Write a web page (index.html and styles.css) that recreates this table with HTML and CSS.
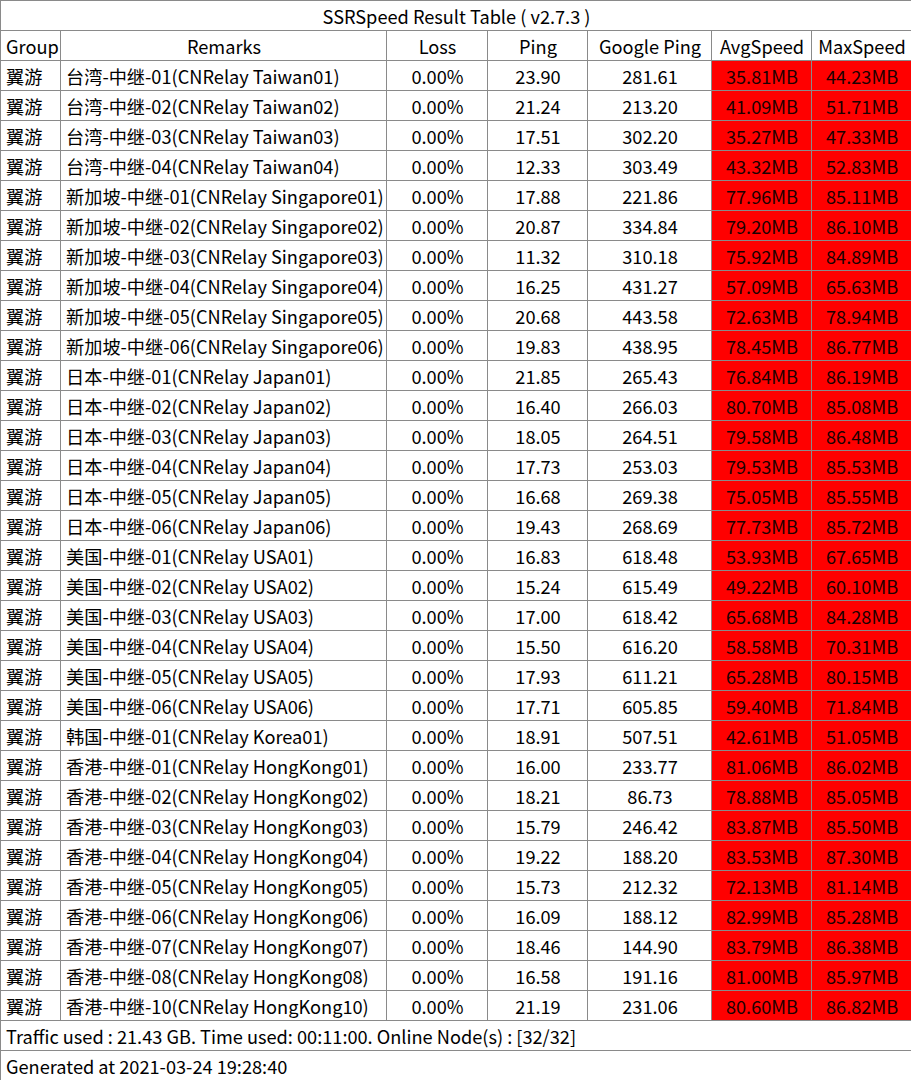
FILE: index.html
```html
<!DOCTYPE html>
<html>
<head>
<meta charset="utf-8">
<link rel="stylesheet" href="styles.css">
</head>
<body>
<table class="result">
<colgroup>
<col class="c-group"><col class="c-remarks"><col class="c-loss"><col class="c-ping"><col class="c-gping"><col class="c-avg"><col class="c-max">
</colgroup>
<thead>
<tr><th colspan="7" class="title">SSRSpeed Result Table ( v2.7.3 )</th></tr>
<tr><th class="left">Group</th><th>Remarks</th><th>Loss</th><th>Ping</th><th>Google Ping</th><th>AvgSpeed</th><th>MaxSpeed</th></tr>
</thead>
<tbody>
<tr><td class="left">翼游</td><td class="left">台湾-中继-01(CNRelay Taiwan01)</td><td>0.00%</td><td>23.90</td><td>281.61</td><td class="red">35.81MB</td><td class="red">44.23MB</td></tr>
<tr><td class="left">翼游</td><td class="left">台湾-中继-02(CNRelay Taiwan02)</td><td>0.00%</td><td>21.24</td><td>213.20</td><td class="red">41.09MB</td><td class="red">51.71MB</td></tr>
<tr><td class="left">翼游</td><td class="left">台湾-中继-03(CNRelay Taiwan03)</td><td>0.00%</td><td>17.51</td><td>302.20</td><td class="red">35.27MB</td><td class="red">47.33MB</td></tr>
<tr><td class="left">翼游</td><td class="left">台湾-中继-04(CNRelay Taiwan04)</td><td>0.00%</td><td>12.33</td><td>303.49</td><td class="red">43.32MB</td><td class="red">52.83MB</td></tr>
<tr><td class="left">翼游</td><td class="left">新加坡-中继-01(CNRelay Singapore01)</td><td>0.00%</td><td>17.88</td><td>221.86</td><td class="red">77.96MB</td><td class="red">85.11MB</td></tr>
<tr><td class="left">翼游</td><td class="left">新加坡-中继-02(CNRelay Singapore02)</td><td>0.00%</td><td>20.87</td><td>334.84</td><td class="red">79.20MB</td><td class="red">86.10MB</td></tr>
<tr><td class="left">翼游</td><td class="left">新加坡-中继-03(CNRelay Singapore03)</td><td>0.00%</td><td>11.32</td><td>310.18</td><td class="red">75.92MB</td><td class="red">84.89MB</td></tr>
<tr><td class="left">翼游</td><td class="left">新加坡-中继-04(CNRelay Singapore04)</td><td>0.00%</td><td>16.25</td><td>431.27</td><td class="red">57.09MB</td><td class="red">65.63MB</td></tr>
<tr><td class="left">翼游</td><td class="left">新加坡-中继-05(CNRelay Singapore05)</td><td>0.00%</td><td>20.68</td><td>443.58</td><td class="red">72.63MB</td><td class="red">78.94MB</td></tr>
<tr><td class="left">翼游</td><td class="left">新加坡-中继-06(CNRelay Singapore06)</td><td>0.00%</td><td>19.83</td><td>438.95</td><td class="red">78.45MB</td><td class="red">86.77MB</td></tr>
<tr><td class="left">翼游</td><td class="left">日本-中继-01(CNRelay Japan01)</td><td>0.00%</td><td>21.85</td><td>265.43</td><td class="red">76.84MB</td><td class="red">86.19MB</td></tr>
<tr><td class="left">翼游</td><td class="left">日本-中继-02(CNRelay Japan02)</td><td>0.00%</td><td>16.40</td><td>266.03</td><td class="red">80.70MB</td><td class="red">85.08MB</td></tr>
<tr><td class="left">翼游</td><td class="left">日本-中继-03(CNRelay Japan03)</td><td>0.00%</td><td>18.05</td><td>264.51</td><td class="red">79.58MB</td><td class="red">86.48MB</td></tr>
<tr><td class="left">翼游</td><td class="left">日本-中继-04(CNRelay Japan04)</td><td>0.00%</td><td>17.73</td><td>253.03</td><td class="red">79.53MB</td><td class="red">85.53MB</td></tr>
<tr><td class="left">翼游</td><td class="left">日本-中继-05(CNRelay Japan05)</td><td>0.00%</td><td>16.68</td><td>269.38</td><td class="red">75.05MB</td><td class="red">85.55MB</td></tr>
<tr><td class="left">翼游</td><td class="left">日本-中继-06(CNRelay Japan06)</td><td>0.00%</td><td>19.43</td><td>268.69</td><td class="red">77.73MB</td><td class="red">85.72MB</td></tr>
<tr><td class="left">翼游</td><td class="left">美国-中继-01(CNRelay USA01)</td><td>0.00%</td><td>16.83</td><td>618.48</td><td class="red">53.93MB</td><td class="red">67.65MB</td></tr>
<tr><td class="left">翼游</td><td class="left">美国-中继-02(CNRelay USA02)</td><td>0.00%</td><td>15.24</td><td>615.49</td><td class="red">49.22MB</td><td class="red">60.10MB</td></tr>
<tr><td class="left">翼游</td><td class="left">美国-中继-03(CNRelay USA03)</td><td>0.00%</td><td>17.00</td><td>618.42</td><td class="red">65.68MB</td><td class="red">84.28MB</td></tr>
<tr><td class="left">翼游</td><td class="left">美国-中继-04(CNRelay USA04)</td><td>0.00%</td><td>15.50</td><td>616.20</td><td class="red">58.58MB</td><td class="red">70.31MB</td></tr>
<tr><td class="left">翼游</td><td class="left">美国-中继-05(CNRelay USA05)</td><td>0.00%</td><td>17.93</td><td>611.21</td><td class="red">65.28MB</td><td class="red">80.15MB</td></tr>
<tr><td class="left">翼游</td><td class="left">美国-中继-06(CNRelay USA06)</td><td>0.00%</td><td>17.71</td><td>605.85</td><td class="red">59.40MB</td><td class="red">71.84MB</td></tr>
<tr><td class="left">翼游</td><td class="left">韩国-中继-01(CNRelay Korea01)</td><td>0.00%</td><td>18.91</td><td>507.51</td><td class="red">42.61MB</td><td class="red">51.05MB</td></tr>
<tr><td class="left">翼游</td><td class="left">香港-中继-01(CNRelay HongKong01)</td><td>0.00%</td><td>16.00</td><td>233.77</td><td class="red">81.06MB</td><td class="red">86.02MB</td></tr>
<tr><td class="left">翼游</td><td class="left">香港-中继-02(CNRelay HongKong02)</td><td>0.00%</td><td>18.21</td><td>86.73</td><td class="red">78.88MB</td><td class="red">85.05MB</td></tr>
<tr><td class="left">翼游</td><td class="left">香港-中继-03(CNRelay HongKong03)</td><td>0.00%</td><td>15.79</td><td>246.42</td><td class="red">83.87MB</td><td class="red">85.50MB</td></tr>
<tr><td class="left">翼游</td><td class="left">香港-中继-04(CNRelay HongKong04)</td><td>0.00%</td><td>19.22</td><td>188.20</td><td class="red">83.53MB</td><td class="red">87.30MB</td></tr>
<tr><td class="left">翼游</td><td class="left">香港-中继-05(CNRelay HongKong05)</td><td>0.00%</td><td>15.73</td><td>212.32</td><td class="red">72.13MB</td><td class="red">81.14MB</td></tr>
<tr><td class="left">翼游</td><td class="left">香港-中继-06(CNRelay HongKong06)</td><td>0.00%</td><td>16.09</td><td>188.12</td><td class="red">82.99MB</td><td class="red">85.28MB</td></tr>
<tr><td class="left">翼游</td><td class="left">香港-中继-07(CNRelay HongKong07)</td><td>0.00%</td><td>18.46</td><td>144.90</td><td class="red">83.79MB</td><td class="red">86.38MB</td></tr>
<tr><td class="left">翼游</td><td class="left">香港-中继-08(CNRelay HongKong08)</td><td>0.00%</td><td>16.58</td><td>191.16</td><td class="red">81.00MB</td><td class="red">85.97MB</td></tr>
<tr><td class="left">翼游</td><td class="left">香港-中继-10(CNRelay HongKong10)</td><td>0.00%</td><td>21.19</td><td>231.06</td><td class="red">80.60MB</td><td class="red">86.82MB</td></tr>
</tbody>
<tfoot>
<tr><td colspan="7" class="left">Traffic used : 21.43 GB. Time used: 00:11:00. Online Node(s) : [32/32]</td></tr>
<tr><td colspan="7" class="left">Generated at 2021-03-24 19:28:40</td></tr>
</tfoot>
</table>
</body>
</html>
```
FILE: styles.css
```css
html, body {
  margin: 0;
  padding: 0;
  background: #ffffff;
}
.result {
  border-collapse: collapse;
  table-layout: fixed;
  width: 911px;
  font-family: "Noto Sans CJK SC", "Noto Sans", sans-serif;
  font-size: 18.2px;
  color: #000;
}
.c-group { width: 60px; }
.c-remarks { width: 326px; }
.c-loss { width: 101px; }
.c-ping { width: 100px; }
.c-gping { width: 124px; }
.c-avg { width: 100px; }
.c-max { width: 100px; }
.result th, .result td {
  border: 1px solid #8a8a8a;
  height: 29px;
  padding: 2px 4px 0 5px;
  box-sizing: border-box;
  line-height: 27px;
  text-align: center;
  font-weight: normal;
  white-space: nowrap;
  overflow: hidden;
}
.result .left {
  text-align: left;
}
.result .red {
  background: #ff0000;
  color: #1a0000;
}
```
